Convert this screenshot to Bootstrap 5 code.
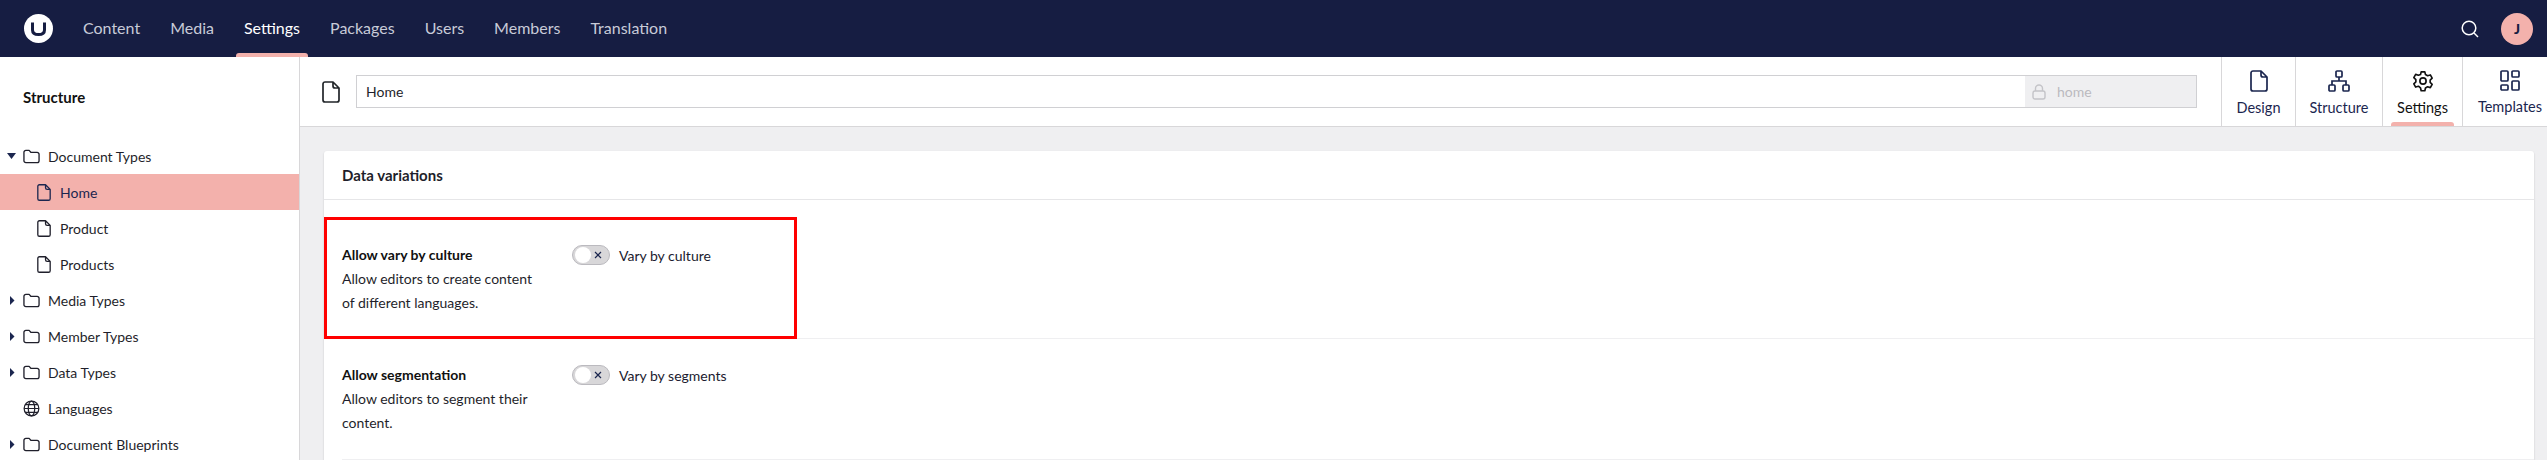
<!DOCTYPE html>
<html lang="en">
<head>
    <meta charset="UTF-8">
    <title>Umbraco - Document Types</title>
    <link href="https://cdn.jsdelivr.net/npm/bootstrap@5.3.0/dist/css/bootstrap.min.css" rel="stylesheet">
    <style>
        html, body { height: 460px; overflow: hidden; }
        body { font-family: Lato, "Open Sans", sans-serif; font-size: 14px; color: #1b1b2f; background: #efeff1; }
        .top-bar { height: 57px; background: #161d42; padding-left: 24px; padding-right: 14px; }
        .logo-mark { width: 29px; height: 29px; margin-right: 22px; }
        .sec-link { position: relative; height: 57px; line-height: 55px; padding: 0 8px; margin-right: 14px; font-size: 16px; color: #c8cbd8; text-decoration: none; }
        .sec-link.on { color: #fff; }
        .sec-link.on::after, .app-tab.on::after { content: ""; position: absolute; bottom: 0; height: 4px; background: #f3b1ac; border-radius: 3px 3px 0 0; }
        .sec-link.on::after { left: 0; right: 0; }
        .avatar-dot { width: 32px; height: 32px; border-radius: 50%; background: #f3b1ac; color: #161d42; font-size: 14px; font-weight: 900; margin-left: 22px; }
        .work-row { height: 403px; }
        .tree-side { width: 300px; flex: none; background: #fff; border-right: 1px solid #d8d7d9; }
        .tree-title { height: 81px; padding: 28px 0 0 23px; font-size: 15px; font-weight: 700; color: #111; line-height: 24px; }
        .tree-row { height: 36px; padding-left: 7px; color: #1f1f2b; }
        .tree-row.sel { background: #f3b1ac; color: #1b264f; }
        .tree-row.sub { padding-left: 37px; }
        .tree-caret { width: 9px; margin-right: 7px; flex: none; }
        .tree-text { margin-left: 8px; }
        .sub .tree-text { margin-left: 9px; }
        .work-head { height: 70px; background: #fff; border-bottom: 1px solid #d8d7d9; padding-left: 22px; }
        .name-box { width: 1841px; height: 33px; margin-left: 16px; margin-right: 24px; border: 1px solid #d0d0d3; }
        .name-val { padding-left: 9px; flex: 1; color: #1f1f2b; }
        .alias-box { width: 171px; background: #efeff1; color: #bbbabf; padding-left: 7px; gap: 11px; }
        .app-tab { position: relative; height: 69px; border-left: 1px solid #d8d7d9; color: #1b264f; font-size: 14.5px; padding-top: 13px; }
        .app-tab.on { color: #111; }
        .app-tab.on::after { left: 8px; right: 8px; }
        .app-design { width: 74px; }
        .app-structure { width: 87px; }
        .app-settings { width: 80px; }
        .app-templates { width: 95px; }
        .app-tab span { margin-top: 5px; line-height: 21px; }
        .panel-wrap { padding: 24px 13px 0 24px; }
        .panel-box { background: #fff; border: 0; border-radius: 3px 3px 0 0; box-shadow: 0 1px 2px rgba(0,0,0,.18); height: 320px; }
        .panel-head { height: 49px; padding: 0 18px; line-height: 49px; font-size: 15px; font-weight: 700; color: #1f1f2b; border-bottom: 1px solid #e6e6e8; }
        .prop-row { position: relative; margin-left: 18px; padding-top: 43px; height: 139px; border-bottom: 1px solid #efeff1; }
        .prop-row + .prop-row { height: 121px; padding-top: 24px; }
        .prop-info { width: 230px; padding-right: 30px; line-height: 24px; color: #1f1f2b; }
        .prop-info strong { display: block; color: #111; }
        .flip-switch { position: relative; width: 38px; height: 20px; border-radius: 10px; background: #d8d7d9; border: 1px solid #bbbabf; margin-right: 9px; flex: none; }
        .flip-switch::before { content: ""; position: absolute; left: 2px; top: 1px; width: 16px; height: 16px; border-radius: 50%; background: #fff; }
        .flip-x { position: absolute; right: 6px; top: 4px; }
        .flip-line { height: 24px; }
        .red-mark { position: absolute; left: -18px; top: 17px; width: 473px; height: 122px; border: 3px solid #f00; }
    </style>
</head>
<body>
    <svg width="0" height="0" class="d-block position-absolute">
        <symbol id="i-doc" viewBox="0 0 18 22"><path d="M3 1h8l6 6v12a2 2 0 0 1-2 2H3a2 2 0 0 1-2-2V3a2 2 0 0 1 2-2zM11 1v4a2 2 0 0 0 2 2h4" fill="none" stroke="currentColor" stroke-width="1.7" stroke-linejoin="round"/></symbol>
        <symbol id="i-folder" viewBox="0 0 18 15"><path d="M1 3a2 2 0 0 1 2-2h3.5l2 2.2H15a2 2 0 0 1 2 2V12a2 2 0 0 1-2 2H3a2 2 0 0 1-2-2z" fill="none" stroke="currentColor" stroke-width="1.4" stroke-linejoin="round"/></symbol>
        <symbol id="i-globe" viewBox="0 0 18 18"><g fill="none" stroke="currentColor" stroke-width="1.3"><circle cx="9" cy="9" r="7.8"/><ellipse cx="9" cy="9" rx="3.4" ry="7.8"/><path d="M1.2 9h15.6M2.4 5h13.2M2.4 13h13.2"/></g></symbol>
    </svg>

    <nav class="top-bar d-flex align-items-center">
        <svg class="logo-mark" viewBox="0 0 29 29"><circle cx="14.5" cy="14.5" r="14.5" fill="#fff"/><path d="M8.5 8.5v7.5c0 3 2.500 4.600 6 4.600s6-1.600 6-4.600V8.500" fill="none" stroke="#161d42" stroke-width="3"/></svg>
        <a class="sec-link" href="#">Content</a>
        <a class="sec-link" href="#">Media</a>
        <a class="sec-link on" href="#">Settings</a>
        <a class="sec-link" href="#">Packages</a>
        <a class="sec-link" href="#">Users</a>
        <a class="sec-link" href="#">Members</a>
        <a class="sec-link" href="#">Translation</a>
        <div class="ms-auto d-flex align-items-center">
            <svg width="18" height="18" viewBox="0 0 18 18" fill="none" stroke="#fff" stroke-width="1.5"><circle cx="8" cy="8" r="6.800"/><path d="M13 13l4 4"/></svg>
            <div class="avatar-dot d-flex align-items-center justify-content-center">J</div>
        </div>
    </nav>

    <div class="work-row d-flex">
        <aside class="tree-side">
            <div class="tree-title">Structure</div>
            <div class="tree-row d-flex align-items-center">
                <svg class="tree-caret" viewBox="0 0 9 6" height="6"><path d="M0 0h9L4.500 6z" fill="#1b264f"/></svg>
                <svg width="17" height="15"><use href="#i-folder"/></svg><span class="tree-text">Document Types</span>
            </div>
            <div class="tree-row sub sel d-flex align-items-center"><svg width="14" height="17"><use href="#i-doc"/></svg><span class="tree-text">Home</span></div>
            <div class="tree-row sub d-flex align-items-center"><svg width="14" height="17"><use href="#i-doc"/></svg><span class="tree-text">Product</span></div>
            <div class="tree-row sub d-flex align-items-center"><svg width="14" height="17"><use href="#i-doc"/></svg><span class="tree-text">Products</span></div>
            <div class="tree-row d-flex align-items-center">
                <svg class="tree-caret" viewBox="0 0 6 9" height="9"><path d="M1.500 0l4.500 4.500L1.500 9z" fill="#1b264f"/></svg>
                <svg width="17" height="15"><use href="#i-folder"/></svg><span class="tree-text">Media Types</span>
            </div>
            <div class="tree-row d-flex align-items-center">
                <svg class="tree-caret" viewBox="0 0 6 9" height="9"><path d="M1.500 0l4.500 4.500L1.500 9z" fill="#1b264f"/></svg>
                <svg width="17" height="15"><use href="#i-folder"/></svg><span class="tree-text">Member Types</span>
            </div>
            <div class="tree-row d-flex align-items-center">
                <svg class="tree-caret" viewBox="0 0 6 9" height="9"><path d="M1.500 0l4.500 4.500L1.500 9z" fill="#1b264f"/></svg>
                <svg width="17" height="15"><use href="#i-folder"/></svg><span class="tree-text">Data Types</span>
            </div>
            <div class="tree-row d-flex align-items-center">
                <span class="tree-caret"></span>
                <svg width="17" height="17"><use href="#i-globe"/></svg><span class="tree-text">Languages</span>
            </div>
            <div class="tree-row d-flex align-items-center">
                <svg class="tree-caret" viewBox="0 0 6 9" height="9"><path d="M1.500 0l4.500 4.500L1.500 9z" fill="#1b264f"/></svg>
                <svg width="17" height="15"><use href="#i-folder"/></svg><span class="tree-text">Document Blueprints</span>
            </div>
        </aside>

        <main class="flex-grow-1 overflow-hidden">
            <header class="work-head d-flex align-items-center">
                <svg width="18" height="22" class="text-dark flex-shrink-0"><use href="#i-doc"/></svg>
                <div class="name-box d-flex flex-shrink-0">
                    <div class="name-val d-flex align-items-center">Home</div>
                    <div class="alias-box d-flex align-items-center">
                        <svg width="14" height="16" viewBox="0 0 14 16" fill="none" stroke="#c4c4c8" stroke-width="1.400"><rect x="1" y="7" width="12" height="8" rx="2"/><path d="M3.500 7V4.500a3.500 3.500 0 0 1 7 0V7"/></svg>
                        <span>home</span>
                    </div>
                </div>
                <div class="app-tab app-design d-flex flex-column align-items-center flex-shrink-0">
                    <svg width="18" height="22"><use href="#i-doc"/></svg><span>Design</span>
                </div>
                <div class="app-tab app-structure d-flex flex-column align-items-center flex-shrink-0">
                    <svg width="22" height="22" viewBox="0 0 22 22" fill="none" stroke="currentColor" stroke-width="1.700"><rect x="8" y="1" width="6" height="6" rx="1"/><rect x="1" y="15" width="6" height="6" rx="1"/><rect x="15" y="15" width="6" height="6" rx="1"/><path d="M11 7v4M4 15v-4h14v4"/></svg>
                    <span>Structure</span>
                </div>
                <div class="app-tab app-settings on d-flex flex-column align-items-center flex-shrink-0">
                    <svg width="22" height="22" viewBox="0 0 24 24" fill="none" stroke="currentColor" stroke-width="1.800" stroke-linejoin="round"><circle cx="12" cy="12" r="3.400"/><path d="M10 2h4l.7 3 2.300 1.300 3-.9 2 3.500-2.200 2.100v2.600l2.200 2.100-2 3.500-3-.9-2.300 1.300-.7 3h-4l-.7-3L7 17.700l-3 .9-2-3.500 2.200-2.100v-2.600L2 8.300l2-3.500 3 .9L9.300 5z"/></svg>
                    <span>Settings</span>
                </div>
                <div class="app-tab app-templates d-flex flex-column align-items-center flex-shrink-0">
                    <svg width="20" height="21" viewBox="0 0 20 21" fill="none" stroke="currentColor" stroke-width="1.700"><rect x="1" y="1" width="7" height="10" rx="1"/><rect x="12" y="1" width="7" height="6" rx="1"/><rect x="1" y="15" width="7" height="5" rx="1"/><rect x="12" y="11" width="7" height="9" rx="1"/></svg>
                    <span>Templates</span>
                </div>
            </header>

            <div class="panel-wrap">
                <section class="panel-box">
                    <div class="panel-head">Data variations</div>
                    <div class="prop-row d-flex">
                        <div class="red-mark"></div>
                        <div class="prop-info"><strong>Allow vary by culture</strong>Allow editors to create content of different languages.</div>
                        <div class="flip-line d-flex align-items-center">
                            <div class="flip-switch"><svg class="flip-x" width="10" height="10" viewBox="0 0 10 10" stroke="#1b264f" stroke-width="1.200"><path d="M2 2l6 6M8 2l-6 6"/></svg></div>
                            <span>Vary by culture</span>
                        </div>
                    </div>
                    <div class="prop-row d-flex">
                        <div class="prop-info"><strong>Allow segmentation</strong>Allow editors to segment their content.</div>
                        <div class="flip-line d-flex align-items-center">
                            <div class="flip-switch"><svg class="flip-x" width="10" height="10" viewBox="0 0 10 10" stroke="#1b264f" stroke-width="1.200"><path d="M2 2l6 6M8 2l-6 6"/></svg></div>
                            <span>Vary by segments</span>
                        </div>
                    </div>
                </section>
            </div>
        </main>
    </div>

    <script src="https://cdn.jsdelivr.net/npm/bootstrap@5.3.0/dist/js/bootstrap.bundle.min.js"></script>
</body>
</html>
